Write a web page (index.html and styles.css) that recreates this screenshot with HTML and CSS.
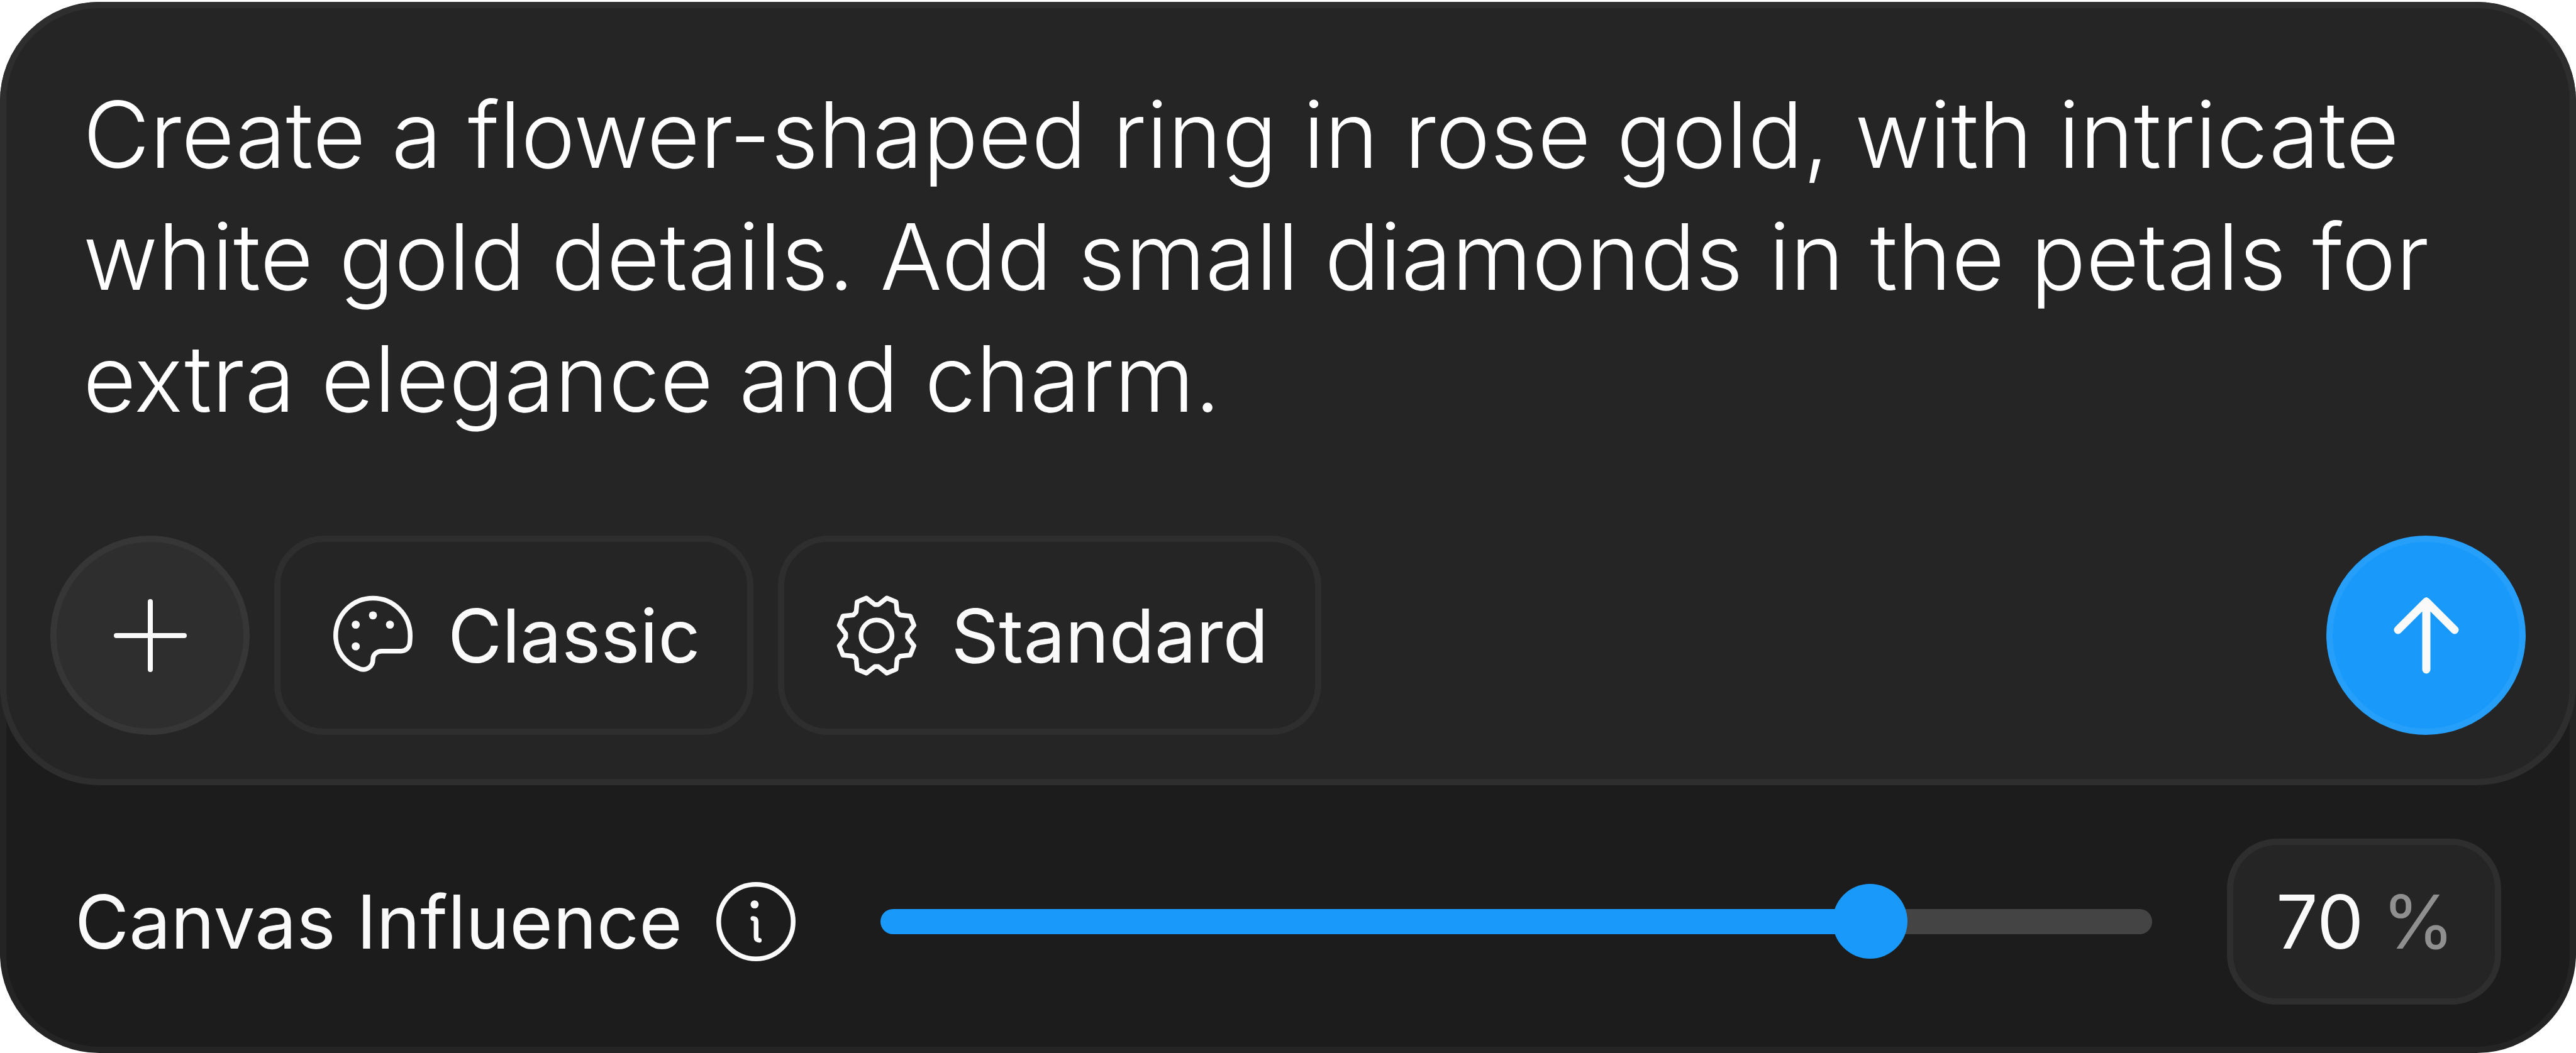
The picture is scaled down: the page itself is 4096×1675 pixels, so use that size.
FILE: index.html
```html
<!DOCTYPE html>
<html lang="en">
<head>
<meta charset="utf-8">
<title>Prompt</title>
<link rel="stylesheet" href="styles.css">
</head>
<body>
<form class="card">
  <section class="composer">
    <textarea class="prompt" rows="3" aria-label="Prompt" spellcheck="false">Create a flower-shaped ring in rose gold, with intricate white gold details. Add small diamonds in the petals for extra elegance and charm.</textarea>
    <div class="toolbar">
      <button class="round" type="button" aria-label="Add">
        <svg class="icon" viewBox="0 0 134 134" stroke-width="8"><path d="M67 13V121M13 67H121"/></svg>
      </button>
      <button class="chip" type="button">
        <svg class="icon" viewBox="102 92 500 500" stroke-width="28">
          <path d="M352 120C230 120 131 219 131 342C131 430 186 508 275 540C315 553 352 525 352 485C350 455 375 434 404 434H520C545 434 566 415 570 390C572 372 573 355 573 342C573 219 474 120 352 120Z"/>
          <g class="dots"><circle cx="352" cy="222" r="24"/><circle cx="250" cy="277" r="24"/><circle cx="453" cy="277" r="24"/><circle cx="250" cy="406" r="24"/></g>
        </svg>
        Classic
      </button>
      <button class="chip" type="button">
        <svg class="icon" viewBox="106 92 500 500" stroke-width="28">
          <path d="M345 158L295 119L240 142L234 203L217 220L156 226L134 281L172 331V353L134 403L156 458L217 464L234 481L240 542L295 565L345 526H367L416 565L471 542L477 481L494 464L555 458L577 403L539 353V331L577 281L555 226L494 220L477 203L471 142L416 119L367 158Z"/>
          <circle cx="355" cy="342" r="92"/>
        </svg>
        Standard
      </button>
      <button class="round send" type="submit" aria-label="Send">
        <svg class="icon" viewBox="0 0 134 134" stroke-width="13"><path d="M67 13V121M22 58L67 13L112 58"/></svg>
      </button>
    </div>
  </section>
  <section class="influence">
    <label class="label" for="influence">Canvas Influence</label>
    <button class="info" type="button" aria-label="About canvas influence">
      <svg class="icon" viewBox="82 75 500 500" stroke-width="28">
        <circle cx="332" cy="325" r="221"/>
        <path d="M314 306C326 306 333 312 333 324V418C333 430 341 436 352 436"/>
        <g class="dots"><circle cx="324" cy="223" r="24"/></g>
      </svg>
    </button>
    <input class="slider" id="influence" type="range" min="0" max="88" value="70">
    <div class="amount">
      <input class="number" type="text" inputmode="numeric" value="70" aria-label="Canvas influence percent">
      <span class="unit">%</span>
    </div>
  </section>
</form>
</body>
</html>
```
FILE: styles.css
```css
* {
  box-sizing: border-box;
}

body {
  margin: 0;
  background: #fff;
  color: #fafafa;
  font-family: Inter, sans-serif;
  font-size: 118px;
  font-weight: 400;
  line-height: 144px;
}

button,
input,
textarea {
  margin: 0;
  padding: 0;
  border: 0;
  background: none;
  color: inherit;
  font: inherit;
}

.card {
  display: flex;
  flex-direction: column;
  min-height: calc(100vh - 3px);
  margin-top: 3px;
  border: 10px solid #242424;
  border-radius: 158px;
  background: #1c1c1c;
}

.composer {
  display: flex;
  flex-direction: column;
  gap: 119px;
  margin: -10px -10px 0;
  padding: 70px;
  border: 10px solid #2e2e2e;
  border-radius: 158px;
  background: #252525;
}

.prompt {
  display: block;
  width: 100%;
  padding: 34px 48px 34px 52px;
  overflow: hidden;
  resize: none;
  outline: 0;
  color: #fff;
  font-size: 146px;
  font-weight: 300;
  line-height: 194px;
}

.toolbar {
  display: flex;
  gap: 39px;
}

.icon {
  display: block;
  flex: none;
  width: 134px;
  height: 134px;
  fill: none;
  stroke: #fafafa;
  stroke-linecap: round;
  stroke-linejoin: round;
}

.dots {
  fill: #fafafa;
  stroke: none;
}

.round,
.chip {
  display: flex;
  align-items: center;
  justify-content: center;
  height: 317px;
  border: 10px solid #2e2e2e;
}

.round {
  width: 317px;
  border-color: #363636;
  border-radius: 50%;
  background: #2e2e2e;
}

.chip {
  gap: 52px;
  padding: 0 74px 0 80px;
  border-radius: 80px;
}

.send {
  margin-left: auto;
  border-color: #259ffa;
  background: #199afa;
}

.influence {
  display: flex;
  flex: 1;
  align-items: center;
  padding: 85px 109px 67px;
}

.label {
  white-space: nowrap;
}

.info {
  margin: 0 131px 0 50px;
}

.slider {
  flex: 1;
  min-width: 0;
  height: 119px;
  margin-right: 119px;
  appearance: none;
}

.slider::-webkit-slider-runnable-track {
  height: 40px;
  border-radius: 20px;
  background: linear-gradient(to right, #199afa 78%, #444 78%);
}

.slider::-webkit-slider-thumb {
  width: 119px;
  height: 119px;
  margin-top: -40px;
  border-radius: 50%;
  background: #199afa;
  appearance: none;
}

.amount {
  display: flex;
  align-items: center;
  justify-content: space-between;
  width: 436px;
  height: 264px;
  padding: 0 64px 0 68px;
  border: 10px solid #2e2e2e;
  border-radius: 80px;
  background: #252525;
}

.number {
  width: 160px;
}

.unit {
  color: #8f8f8f;
}
```
